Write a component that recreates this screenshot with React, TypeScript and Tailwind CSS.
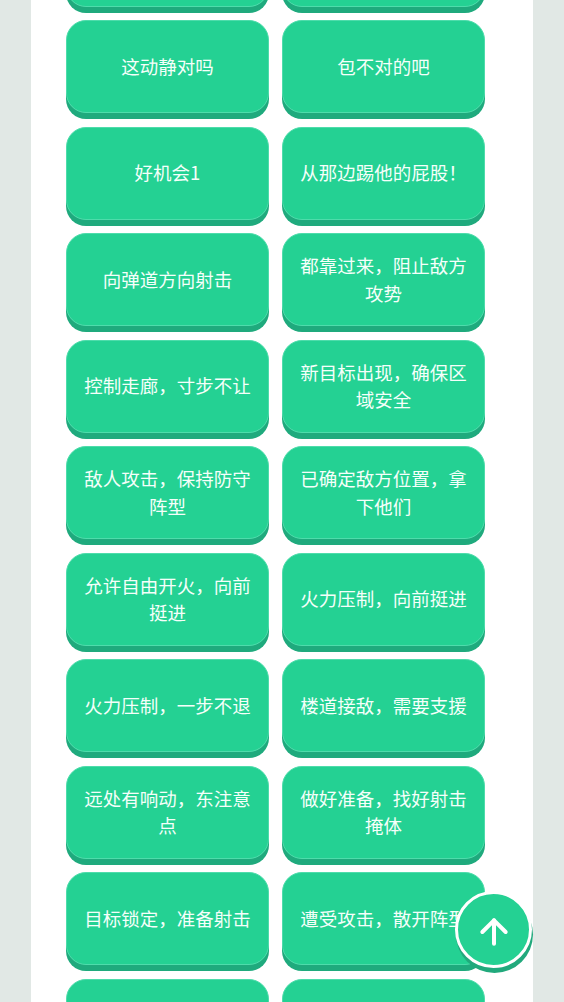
import React from "react";
import { ArrowUp } from "lucide-react";

const items: string[] = [
  "",
  "",
  "这动静对吗",
  "包不对的吧",
  "好机会1",
  "从那边踢他的屁股！",
  "向弹道方向射击",
  "都靠过来，阻止敌方攻势",
  "控制走廊，寸步不让",
  "新目标出现，确保区域安全",
  "敌人攻击，保持防守阵型",
  "已确定敌方位置，拿下他们",
  "允许自由开火，向前挺进",
  "火力压制，向前挺进",
  "火力压制，一步不退",
  "楼道接敌，需要支援",
  "远处有响动，东注意点",
  "做好准备，找好射击掩体",
  "目标锁定，准备射击",
  "遭受攻击，散开阵型",
  "",
  "",
];

export default function App() {
  return (
    <div
      className="h-[1002px] w-[564px] overflow-hidden bg-[#e1e8e5]"
      style={{ fontFamily: '"Noto Sans CJK SC", "Noto Sans", sans-serif' }}
    >
      <div className="mx-[31px] h-full w-[502px] overflow-hidden bg-white">
        <div className="-mt-[86.5px] grid grid-cols-[203px_203px] gap-x-[13px] gap-y-[13.5px] pl-[35px] pr-[48px]">
          {items.map((t, i) => (
            <button
              key={i}
              className="flex h-[93px] items-center justify-center rounded-[20px] border border-[#4edcab] bg-[#24d193] px-[14px] text-center text-[18.5px] leading-[27.5px] text-[#f5fffa] shadow-[0_6px_0_#1faa7d]"
            >
              {t}
            </button>
          ))}
        </div>
      </div>
      <button className="absolute left-[455px] top-[891px] flex h-[77px] w-[77px] items-center justify-center rounded-full border-[3px] border-white bg-[#24d193] text-white shadow-[1px_5px_0_#21a97c]">
        <ArrowUp size={40} strokeWidth={2.4} className="mt-[5px]" />
      </button>
    </div>
  );
}
